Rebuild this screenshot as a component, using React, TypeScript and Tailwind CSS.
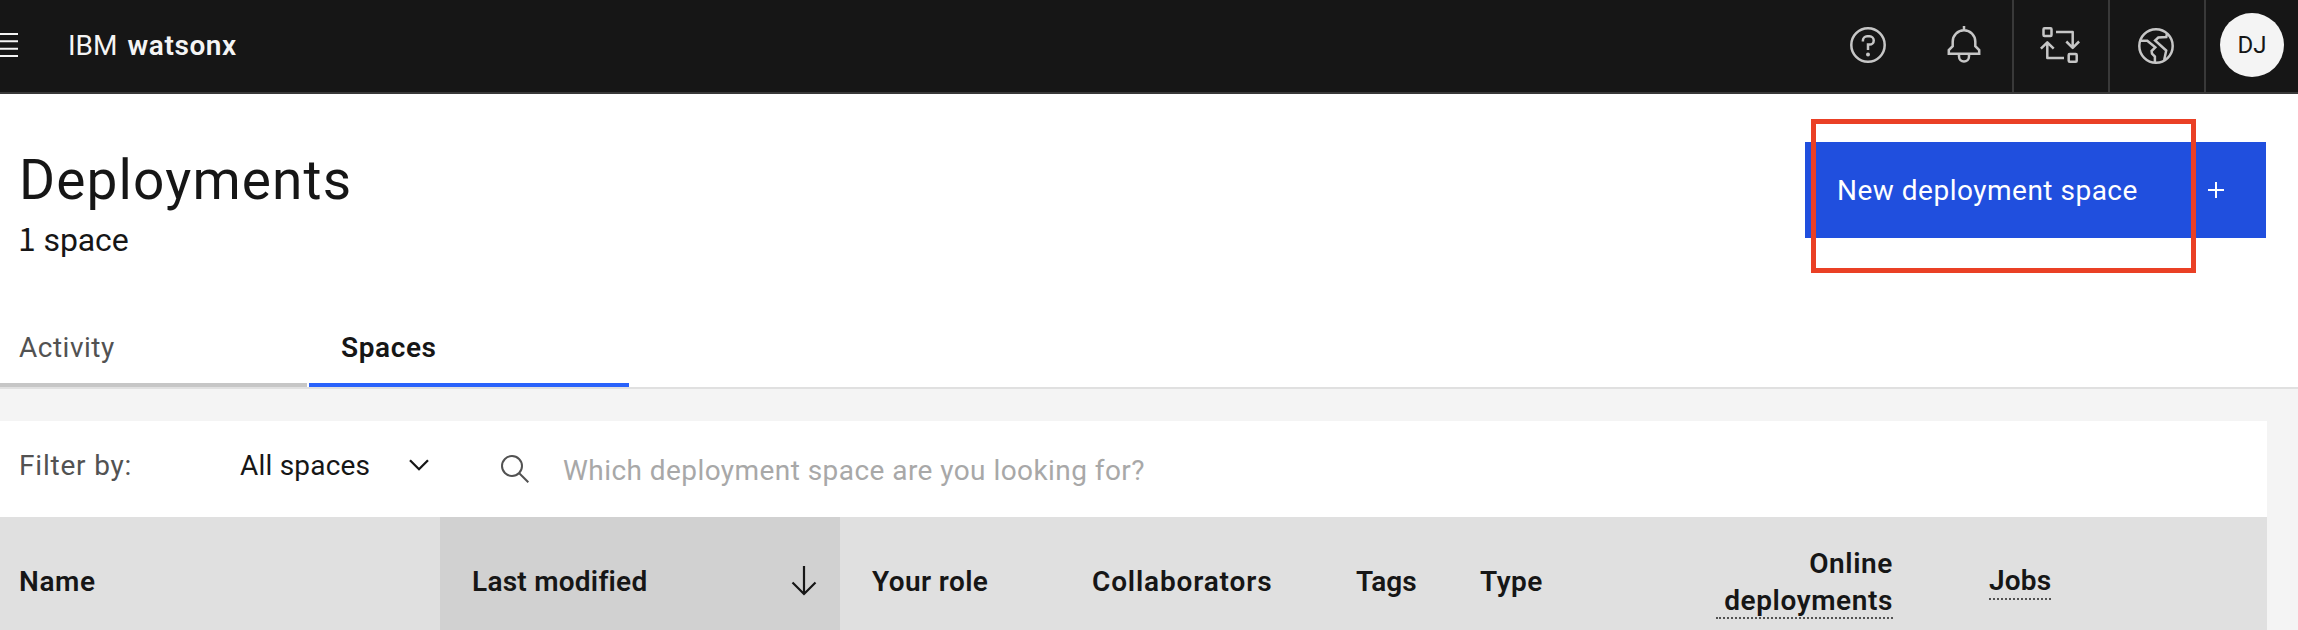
import React from "react";

const Icon = ({ children }: { children: React.ReactNode }) => (
  <svg viewBox="0 0 40 40" fill="none" stroke="currentColor" strokeWidth="2.5" className="h-10 w-10 overflow-visible">
    {children}
  </svg>
);

const HeaderCell = ({ children, divided = false }: { children: React.ReactNode; divided?: boolean }) => (
  <div
    className={`flex h-full w-24 shrink-0 items-center justify-center pb-[2px] text-[#c6c6c6] ${
      divided ? "border-l-2 border-[#393939] pr-[2px]" : ""
    }`}
  >
    {children}
  </div>
);

function Header() {
  return (
    <header className="flex h-[94px] items-center border-b-2 border-[#393939] bg-[#161616]">
      <svg viewBox="0 0 18 24" className="mb-[2px] h-6 w-[18px]" fill="#f4f4f4">
        <path d="M0 0h18v2H0zM0 7.300h18v2H0zM0 14.700h18v2H0zM0 22h18v2H0z" />
      </svg>
      <div className="ml-[50px] flex gap-[10px] text-[28px] leading-9 text-[#f4f4f4]">
        <span>IBM</span>
        <span className="font-semibold tracking-[0.6px]">watsonx</span>
      </div>
      <div className="ml-auto flex h-full">
        <HeaderCell>
          <Icon>
            <circle cx="20" cy="20" r="16.7" />
            <path d="M14.900 16.400v-.9a4.200 4.200 0 0 1 4.200-4.200h2.500a4.150 4.150 0 0 1 0 8.300H20V25" />
            <circle cx="20" cy="29.500" r="2" fill="currentColor" stroke="none" />
          </Icon>
        </HeaderCell>
        <HeaderCell>
          <Icon>
            <path d="M20 1v4M20 5.200A11.300 11.300 0 0 0 8.700 16.500v4.700L4.800 25.100v3.700h30.400v-3.700l-3.900-3.900v-4.700A11.300 11.300 0 0 0 20 5.200zM15 29v2.500a5 5 0 0 0 10 0V29" />
          </Icon>
        </HeaderCell>
        <HeaderCell divided>
          <Icon>
            <rect x="3.500" y="3.300" width="8" height="7.700" rx="1" />
            <rect x="28.700" y="29" width="8" height="7.700" rx="1" />
            <path
              strokeLinejoin="round"
              d="M16 7h16.700v16M26.300 16.500l6.400 6.400 6.400-6.400M24 33H7.300V17M.9 23.700l6.400-6.400 6.400 6.400"
            />
          </Icon>
        </HeaderCell>
        <HeaderCell divided>
          <div className="pt-[2px]">
            <Icon>
              <circle cx="20" cy="20" r="16.7" />
              <path d="M4 14.700h7.300l8 6.600-3.700 3.700.4 2.700 2.900 2.800v6M31 7.500l-.7 3.500-8 .5-3.200 3L30.200 24.500l-2 9.500" />
            </Icon>
          </div>
        </HeaderCell>
        <div className="flex h-full w-[94px] items-center border-l-2 border-[#393939] pb-[2px] pl-[14px]">
          <div className="flex h-16 w-16 items-center justify-center rounded-full bg-[#f4f4f4] text-2xl text-[#161616]">
            DJ
          </div>
        </div>
      </div>
    </header>
  );
}

function FilterBar() {
  return (
    <div className="flex h-24 bg-white">
      <span className="w-[240px] pl-[19px] pt-[27px] tracking-[0.8px] text-[#525252]">Filter by:</span>
      <span className="w-[169px] pt-[27px] tracking-[0.2px]">All spaces</span>
      <svg viewBox="0 0 20 12" className="mt-[38px] h-3 w-5" fill="none" stroke="#161616" strokeWidth="2.3">
        <path d="M1 1.200l9 9 9-9" />
      </svg>
      <svg viewBox="0 0 28 28" className="ml-[72px] mt-[34px] h-7 w-7" fill="none" stroke="#525252" strokeWidth="2">
        <circle cx="11" cy="11" r="10" />
        <path d="M18 18l9.300 9.300" />
      </svg>
      <span className="ml-[34px] pt-8 tracking-[0.44px] text-[#a8a8a8]">
        Which deployment space are you looking for?
      </span>
    </div>
  );
}

function TableHead() {
  return (
    <div className="flex h-[113px] bg-[#e0e0e0] font-semibold">
      <div className="w-[440px] pl-[19px] pt-[47px] tracking-[0.6px]">Name</div>
      <div className="flex w-[400px] justify-between bg-[#d1d1d1] pl-8 pr-[23px] pt-[47px]">
        <span className="tracking-[0.25px]">Last modified</span>
        <svg viewBox="0 0 26 30" className="mt-[2px] h-[30px] w-[26px]" fill="none" stroke="#161616" strokeWidth="2.2">
          <path d="M13 0v28M1.500 16.500L13 28l11.500-11.500" />
        </svg>
      </div>
      <div className="w-[252px] pl-8 pt-[47px] tracking-[0.4px]">Your role</div>
      <div className="w-[264px] pt-[47px] tracking-[0.85px]">Collaborators</div>
      <div className="w-[124px] pt-[47px]">Tags</div>
      <div className="w-[236px] pt-[47px] tracking-[0.5px]">Type</div>
      <div className="mt-7 h-[74px] w-[177px] border-b-2 border-dotted border-[#525252] text-right leading-[37px] tracking-[0.6px]">
        Online deployments
      </div>
      <div className="ml-24 mt-[46px] h-[37px] w-[62px] border-b-2 border-dotted border-[#525252] tracking-[0.2px]">
        Jobs
      </div>
    </div>
  );
}

export default function App() {
  return (
    <div className="flex h-[630px] w-[2298px] flex-col overflow-hidden bg-white font-['Roboto',sans-serif] text-[28px] leading-9 text-[#161616]">
      <Header />
      <section className="flex h-[235px] justify-between pr-8">
        <div className="flex flex-col pl-[18px] pt-12">
          <h1 className="pl-px text-[55px] leading-[76px] tracking-[1.15px]">Deployments</h1>
          <p className="-mt-[3px] text-[32px] leading-[44px] tracking-[-0.1px]">
            <span className="font-['Noto_Sans_CJK_SC',sans-serif]">1</span> space
          </p>
        </div>
        <button className="relative mt-12 flex h-24 w-[461px] items-center justify-between bg-[#204fde] pl-8 pr-[42px] text-white">
          <span className="pt-[2px] tracking-[0.5px]">New deployment space</span>
          <svg viewBox="0 0 16 16" className="h-4 w-4" fill="currentColor">
            <path d="M7 0h2v7h7v2H9v7H7V9H0V7h7z" />
          </svg>
          <span className="absolute -top-[23px] left-[6px] h-[154px] w-[385px] border-[5px] border-[#ea4025]" />
        </button>
      </section>
      <nav className="flex h-[60px] gap-[2px] border-b-2 border-[#e0e0e0]">
        <div className="w-[307px] border-b-4 border-[#c6c6c6] pl-[19px] pt-px tracking-[0.5px] text-[#525252]">Activity</div>
        <div className="w-[320px] border-b-4 border-[#2962fb] pl-8 pt-px font-semibold tracking-[0.6px]">Spaces</div>
      </nav>
      <main className="grow bg-[#f4f4f4] pr-[31px] pt-8">
        <FilterBar />
        <TableHead />
      </main>
    </div>
  );
}
